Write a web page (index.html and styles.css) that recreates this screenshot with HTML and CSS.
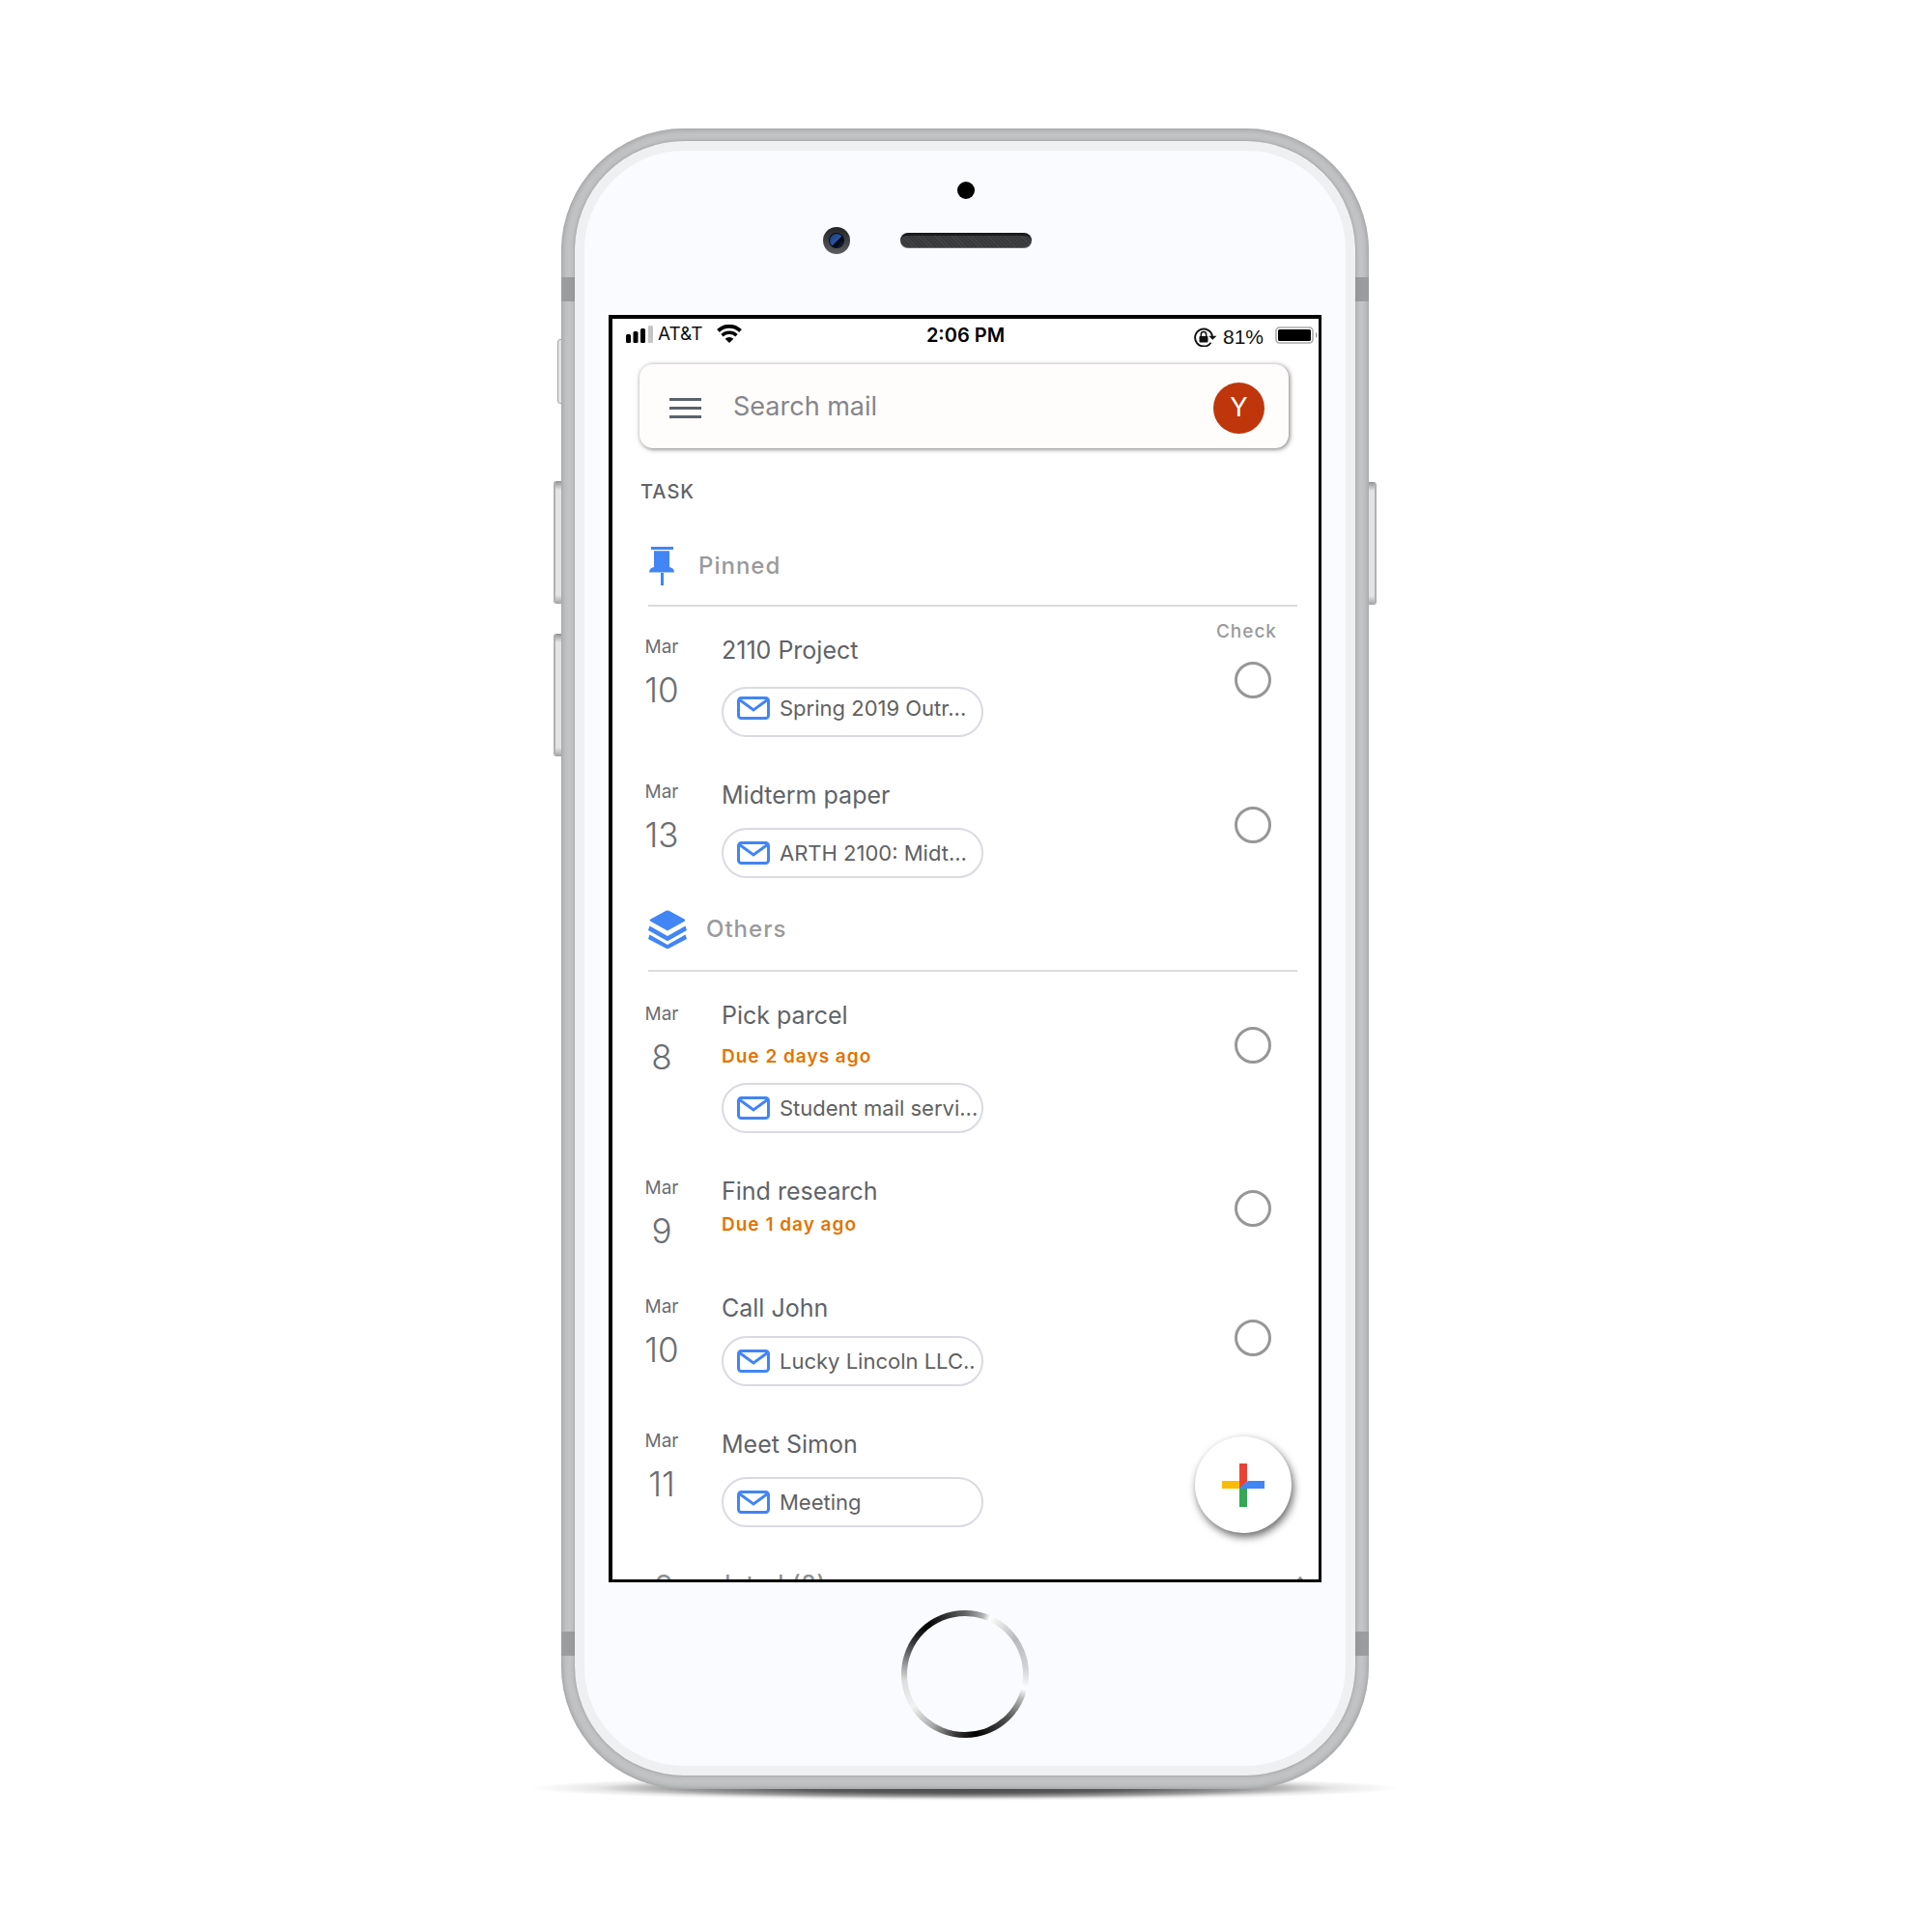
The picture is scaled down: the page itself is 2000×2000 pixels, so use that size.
FILE: index.html
```html
<!DOCTYPE html>
<html lang="en">
<head>
<meta charset="utf-8">
<meta name="viewport" content="width=device-width, initial-scale=1">
<title>Mail – Tasks</title>
<link rel="stylesheet" href="styles.css">
</head>
<body>
<svg class="sprite" aria-hidden="true">
  <symbol id="mail" viewBox="0 0 34 24">
    <rect x="1.5" y="1.5" width="31" height="21" rx="3" fill="none" stroke="#4285f4" stroke-width="3"/>
    <path d="M2 3l15 11L32 3" fill="none" stroke="#4285f4" stroke-width="3"/>
  </symbol>
</svg>
<div class="phone">
  <span class="ground-shadow"></span>
  <span class="key key-mute"></span>
  <span class="key key-up"></span>
  <span class="key key-down"></span>
  <span class="key key-power"></span>
  <div class="frame">
    <span class="band band-top"></span>
    <span class="band band-bottom"></span>
    <div class="bezel">
      <div class="hardware">
        <span class="sensor"></span>
        <div class="earpiece">
          <svg class="camera" viewBox="0 0 28 28" aria-hidden="true">
            <defs>
              <linearGradient id="cam" x1="0" y1="0" x2="0" y2="1"><stop offset="0" stop-color="#222426"/><stop offset="1" stop-color="#5c5d60"/></linearGradient>
              <linearGradient id="lens" x1="0" y1="0" x2="1" y2="1"><stop offset="0" stop-color="#1c3c74"/><stop offset=".5" stop-color="#2a55a4"/><stop offset=".55" stop-color="#060b18"/><stop offset=".72" stop-color="#060b18"/><stop offset="1" stop-color="#24478a"/></linearGradient>
            </defs>
            <circle cx="14" cy="14" r="14" fill="url(#cam)"/>
            <circle cx="14" cy="14" r="8" fill="#0a0c12"/>
            <circle cx="14" cy="14" r="7" fill="url(#lens)"/>
          </svg>
          <span class="speaker"></span>
        </div>
      </div>

      <main class="screen">
        <div class="status">
          <div class="status-left">
            <svg width="28" height="18" viewBox="0 0 28 18" aria-hidden="true">
              <rect x="0" y="9" width="5" height="9" rx="1.5"/><rect x="7.5" y="6" width="5" height="12" rx="1.5"/><rect x="15" y="3" width="5" height="15" rx="1.5"/><rect x="23" y="0" width="5" height="18" rx="1.5" fill="#c4c4c4"/>
            </svg>
            <span class="carrier">AT&amp;T</span>
            <svg class="wifi" width="26" height="19" viewBox="0 0 26 19" aria-hidden="true">
              <path d="M1.5 6.5a16.5 16.5 0 0 1 23 0" fill="none" stroke="#000" stroke-width="4"/>
              <path d="M5.5 11.3a11 11 0 0 1 15 0" fill="none" stroke="#000" stroke-width="3.5"/>
              <path d="M13 19l-4.300-4.300a6 6 0 0 1 8.600 0z"/>
            </svg>
          </div>
          <span class="clock">2:06 PM</span>
          <div class="status-right">
            <svg class="lock" width="24" height="20" viewBox="0 0 24 20" aria-hidden="true">
              <path d="M17.500 15.700A9 9 0 1 1 19 9" fill="none" stroke="#111" stroke-width="1.900"/>
              <path d="M15.200 8.800h8.300l-4.200 4z" fill="#111"/>
              <rect x="5.500" y="9" width="9" height="6.500" rx="1" fill="#111"/>
              <path d="M7.300 9.500V7.300a2.700 2.700 0 0 1 5.400 0v2.200" fill="none" stroke="#111" stroke-width="1.500"/>
            </svg>
            <span class="percent">81%</span>
            <svg class="battery" width="44" height="18" viewBox="0 0 44 18" aria-hidden="true">
              <rect x="1" y="1" width="38" height="16" rx="3.500" fill="none" stroke="#aaa" stroke-width="1.600"/>
              <rect x="3" y="3" width="34" height="12" rx="1.500"/>
              <path d="M42 6c2 1 2 5 0 6z" fill="#999"/>
            </svg>
          </div>
        </div>

        <form class="search">
          <button type="button" class="menu" aria-label="Menu">
            <svg width="33" height="21" viewBox="0 0 33 21" aria-hidden="true"><path d="M0 1.500h33M0 10.500h33M0 19.500h33" stroke="#5b626b" stroke-width="2.800"/></svg>
          </button>
          <input class="field" type="text" aria-label="Search mail" placeholder="Search mail">
          <button type="button" class="avatar">Y</button>
        </form>

        <h1 class="heading">TASK</h1>

        <h2 class="section">
          <svg width="32" height="40" viewBox="0 0 32 40" fill="#4285f4" aria-hidden="true">
            <path d="M3 0h23v3H3zM6 4.300h16V21c3 .6 5 2.500 5 5.500H1c0-3 2-4.900 5-5.500zM13 27h3v13h-3z"/>
          </svg>
          Pinned
        </h2>
        <p class="check-label">Check</p>
        <ul class="tasks">
          <li class="task">
            <time class="date"><span class="month">Mar</span><span class="day">10</span></time>
            <div class="entry entry-loose"><label class="title" for="t1">2110 Project</label>
              <a class="chip chip-high" href="#"><svg class="mail" aria-hidden="true"><use href="#mail"/></svg>Spring 2019 Outr...</a></div>
            <input class="tick" type="checkbox" id="t1">
          </li>
          <li class="task">
            <time class="date"><span class="month">Mar</span><span class="day">13</span></time>
            <div class="entry entry-wide"><label class="title" for="t2">Midterm paper</label>
              <a class="chip" href="#"><svg class="mail" aria-hidden="true"><use href="#mail"/></svg>ARTH 2100: Midt...</a></div>
            <input class="tick" type="checkbox" id="t2">
          </li>
        </ul>

        <h2 class="section section-others">
          <svg width="40" height="40" viewBox="0 0 40 40" fill="#4285f4" aria-hidden="true">
            <path d="M18.500.8q1.500-.8 3 0L37.500 9.500q1.600 1.100 0 2.200L20 21.500 2.500 11.700q-1.600-1.100 0-2.200zM1.500 16.500L20 27l18.500-10.500L40 21 20 32.300 0 21zM1.500 25.500L20 36l18.500-10.500L40 30 20 40.500 0 30z"/>
          </svg>
          Others
        </h2>
        <ul class="tasks">
          <li class="task">
            <time class="date date-low"><span class="month">Mar</span><span class="day">8</span></time>
            <div class="entry"><label class="title" for="t3">Pick parcel</label>
              <span class="due">Due 2 days ago</span>
              <a class="chip" href="#"><svg class="mail" aria-hidden="true"><use href="#mail"/></svg>Student mail servi...</a></div>
            <input class="tick" type="checkbox" id="t3">
          </li>
          <li class="task">
            <time class="date"><span class="month">Mar</span><span class="day">9</span></time>
            <div class="entry entry-tight"><label class="title" for="t4">Find research</label>
              <span class="due">Due 1 day ago</span></div>
            <input class="tick tick-high" type="checkbox" id="t4">
          </li>
          <li class="task">
            <time class="date date-low"><span class="month">Mar</span><span class="day">10</span></time>
            <div class="entry"><label class="title" for="t5">Call John</label>
              <a class="chip" href="#"><svg class="mail" aria-hidden="true"><use href="#mail"/></svg>Lucky Lincoln LLC..</a></div>
            <input class="tick" type="checkbox" id="t5">
          </li>
          <li class="task">
            <time class="date"><span class="month">Mar</span><span class="day">11</span></time>
            <div class="entry entry-wide"><span class="title">Meet Simon</span>
              <a class="chip" href="#"><svg class="mail" aria-hidden="true"><use href="#mail"/></svg>Meeting</a></div>
          </li>
        </ul>

        <button type="button" class="completed">Completed (8)
          <svg width="20" height="12" viewBox="0 0 20 12" aria-hidden="true"><path d="M2 11l8-9 8 9" fill="none" stroke="#8a8a8a" stroke-width="3"/></svg>
        </button>

        <button type="button" class="compose" aria-label="New task">
          <svg width="44" height="45" viewBox="0 0 44 45" aria-hidden="true">
            <path d="M0 18h18v8H0z" fill="#fbbc05"/>
            <path d="M18 0h8v19l-8 7z" fill="#ea4335"/>
            <path d="M18 26h8v19h-8z" fill="#34a853"/>
            <path d="M18 26v-1l8-6 1-1h17v8z" fill="#4285f4"/>
          </svg>
        </button>
      </main>

      <button type="button" class="home" aria-label="Home"></button>
    </div>
  </div>
</div>
</body>
</html>
```
FILE: styles.css
```css
* {
  box-sizing: border-box;
}

body {
  margin: 0;
  padding: 133px 2px 133px 0;
  background: #fff;
  font-family: Inter, "Liberation Sans", sans-serif;
  color: #5f6368;
}

button,
input {
  margin: 0;
  padding: 0;
  border: 0;
  background: none;
  font: inherit;
  color: inherit;
}

h1,
h2,
p,
ul {
  margin: 0;
  padding: 0;
  list-style: none;
}

svg {
  display: block;
  flex: none;
}

.sprite {
  position: absolute;
  width: 0;
  height: 0;
}

/* Device body */

.phone {
  position: relative;
  isolation: isolate;
  width: 100%;
  max-width: 836px;
  margin: 0 auto;
}

.ground-shadow {
  position: absolute;
  z-index: -1;
  left: -32px;
  right: -32px;
  bottom: -12px;
  height: 26px;
  background: radial-gradient(closest-side, #444 0%, #5a5a5a 40%, rgba(110, 110, 110, 0.7) 65%, rgba(160, 160, 160, 0.25) 85%, rgba(255, 255, 255, 0) 100%);
}

.key {
  position: absolute;
  z-index: -1;
  left: -8px;
  width: 12px;
  height: 127px;
  border-left: 2px solid #b0b1b2;
  border-radius: 3px;
  background: linear-gradient(#8f9192 0, #e4e4e6 9px, #e4e4e6 118px, #a0a1a2 100%);
}

.key-mute {
  top: 218px;
  left: -4px;
  height: 67px;
  background: #e4e4e6;
  border: 1px solid #a4a5a6;
}

.key-up {
  top: 365px;
}

.key-down {
  top: 523px;
}

.key-power {
  top: 366px;
  left: auto;
  right: -8px;
  border-left: 0;
  border-right: 2px solid #b0b1b2;
}

.frame {
  position: relative;
  padding: 13px 14px 14px;
  border-radius: 127px;
  background: #c3c4c6;
  box-shadow: inset 0 0 7px #8e8f91;
}

.band {
  position: absolute;
  left: 0;
  right: 0;
  height: 25px;
  background: #9b9c9e;
}

.band-top {
  top: 154px;
}

.band-bottom {
  bottom: 138px;
}

.bezel {
  position: relative;
  display: flex;
  flex-direction: column;
  align-items: center;
  padding: 32px 25px 29px;
  border: 10px solid #eff0f2;
  border-radius: 113px;
  background: #fafbfe;
  box-shadow: 0 0 1px #8e8f91, 0 0 5px rgba(120, 121, 123, 0.5);
}

.hardware {
  width: 100%;
  padding: 0 0 63px 2px;
}

.sensor {
  display: block;
  width: 18px;
  height: 18px;
  margin: 0 auto 29px;
  border-radius: 50%;
  background: #000;
}

.earpiece {
  position: relative;
  display: flex;
  justify-content: center;
  align-items: center;
  height: 28px;
}

.camera {
  position: absolute;
  right: calc(50% + 120px);
  width: 28px;
  height: 28px;
}

.speaker {
  width: 136px;
  height: 16px;
  border-radius: 8px;
  background: repeating-linear-gradient(45deg, #434446 0 1px, #38393b 1px 3px);
  border-top: 3px solid #1a1b1c;
  border-bottom: 1px solid #6a6b6d;
}

.home {
  width: 132px;
  height: 132px;
  margin-top: 29px;
  border: 6px solid transparent;
  border-radius: 50%;
  background:
    linear-gradient(#fafbfe, #fafbfe) padding-box,
    conic-gradient(#636465 0deg, #b0b0b1 17deg, #fff 24deg, #f0f0f0 30deg, #b8b9ba 55deg, #d2d3d4 85deg, #fff 104deg, #bbb 113deg, #555 135deg, #000 170deg, #333 188deg, #a8a8a9 212deg, #f2f2f3 238deg, #dcdddd 264deg, #8a8b8c 282deg, #333 302deg, #000 322deg, #333 342deg, #636465 360deg) border-box;
}

/* Screen */

.screen {
  position: relative;
  width: 100%;
  aspect-ratio: 738 / 1312;
  overflow: hidden;
  border: solid #000;
  border-width: 4px 3px 3px 4px;
  background: #fff;
}

.status {
  display: grid;
  grid-template-columns: 1fr auto 1fr;
  align-items: center;
  height: 34px;
  color: #111;
}

.status-left,
.status-right {
  display: flex;
  align-items: center;
}

.status-left {
  padding: 0 0 3px 14px;
}

.status-right {
  justify-content: flex-end;
  padding-right: 1px;
}

.carrier {
  margin: 0 14px 0 5px;
  font-size: 19px;
}

.clock {
  font-size: 20px;
  font-weight: 600;
  color: #000;
}

.lock,
.percent {
  margin-top: 3px;
}

.percent {
  margin-right: 12px;
  margin-left: 6px;
  font-family: "Liberation Sans", Arial, sans-serif;
  font-size: 21px;
}

.search {
  display: flex;
  align-items: center;
  margin: 13px 31px 0 28px;
  padding: 19px 25px 15px 31px;
  border-radius: 14px;
  background: #fffdfc;
  box-shadow: 1px 1px 5px rgba(0, 0, 0, 0.55);
}

.field {
  flex: 1;
  min-width: 0;
  margin-left: 33px;
  padding-bottom: 4px;
  font-size: 27px;
  outline: 0;
}

.field::placeholder {
  color: #85868b;
  opacity: 1;
}

.avatar {
  width: 53px;
  height: 53px;
  padding-bottom: 2px;
  border-radius: 50%;
  background: #bf360c;
  color: #fff;
  font-size: 27px;
}

.heading {
  margin: 33px 0 0 29px;
  font-size: 20px;
  font-weight: 500;
  line-height: 24px;
  letter-spacing: 1px;
}

.section {
  display: flex;
  align-items: center;
  gap: 20px;
  margin: 45px 22px 0 37px;
  padding-bottom: 20px;
  border-bottom: 2px solid #dcdcde;
  color: #999a9c;
  font-size: 24px;
  font-weight: 500;
  line-height: 32px;
  letter-spacing: 1px;
}

.section-others {
  margin-top: 33px;
  padding-bottom: 22px;
}

.check-label {
  margin: 18px 43px -5px 0;
  color: #999a9c;
  font-size: 19px;
  font-weight: 500;
  line-height: 16px;
  letter-spacing: 1px;
  text-align: right;
}

.tasks {
  display: flex;
  flex-direction: column;
  gap: 44px;
  padding: 0 49px 0 33px;
}

.section-others + .tasks {
  padding-top: 29px;
}

.task {
  display: grid;
  grid-template-columns: 36px 1fr 38px;
  align-items: start;
  column-gap: 44px;
}

.date {
  display: flex;
  flex-direction: column;
  align-items: center;
  gap: 12px;
  padding-top: 1px;
  color: #6a6e73;
}

.date-low {
  padding-top: 3px;
}

.month {
  font-size: 19px;
  line-height: 24px;
}

.day {
  font-size: 35px;
  font-weight: 300;
  line-height: 40px;
}

.entry {
  display: flex;
  flex-direction: column;
  align-items: flex-start;
  gap: 13px;
}

.entry-tight {
  gap: 5px;
}

.entry-wide {
  gap: 18px;
}

.entry-loose {
  gap: 22px;
}

.title {
  font-size: 25px;
  line-height: 32px;
}

.due {
  color: #e37400;
  font-size: 19px;
  font-weight: 600;
  line-height: 28px;
  letter-spacing: 1px;
}

.chip {
  display: flex;
  align-items: center;
  gap: 10px;
  width: 271px;
  max-width: 100%;
  height: 52px;
  padding-left: 14px;
  border: 2px solid #dadbe2;
  border-radius: 26px;
  color: #616161;
  font-size: 22px;
  line-height: 32px;
  white-space: nowrap;
  text-decoration: none;
}

.chip-high {
  padding-bottom: 8px;
}

.mail {
  width: 34px;
  height: 24px;
}

.tick {
  appearance: none;
  width: 38px;
  height: 38px;
  margin-top: 28px;
  border: 3px solid #979797;
  border-radius: 50%;
}

.tick-high {
  margin-top: 15px;
}

.completed {
  display: flex;
  justify-content: space-between;
  width: 100%;
  margin-top: 43px;
  padding: 0 9px 0 44px;
  color: #8f9092;
  font-size: 24px;
  font-weight: 500;
  line-height: 32px;
  letter-spacing: 1px;
}

.completed svg {
  margin-top: 8px;
}

.compose {
  position: absolute;
  right: 28px;
  bottom: 48px;
  display: grid;
  place-items: center;
  width: 100px;
  height: 100px;
  border-radius: 50%;
  background: #fff;
  box-shadow: 2px 4px 8px rgba(0, 0, 0, 0.6);
}
```
